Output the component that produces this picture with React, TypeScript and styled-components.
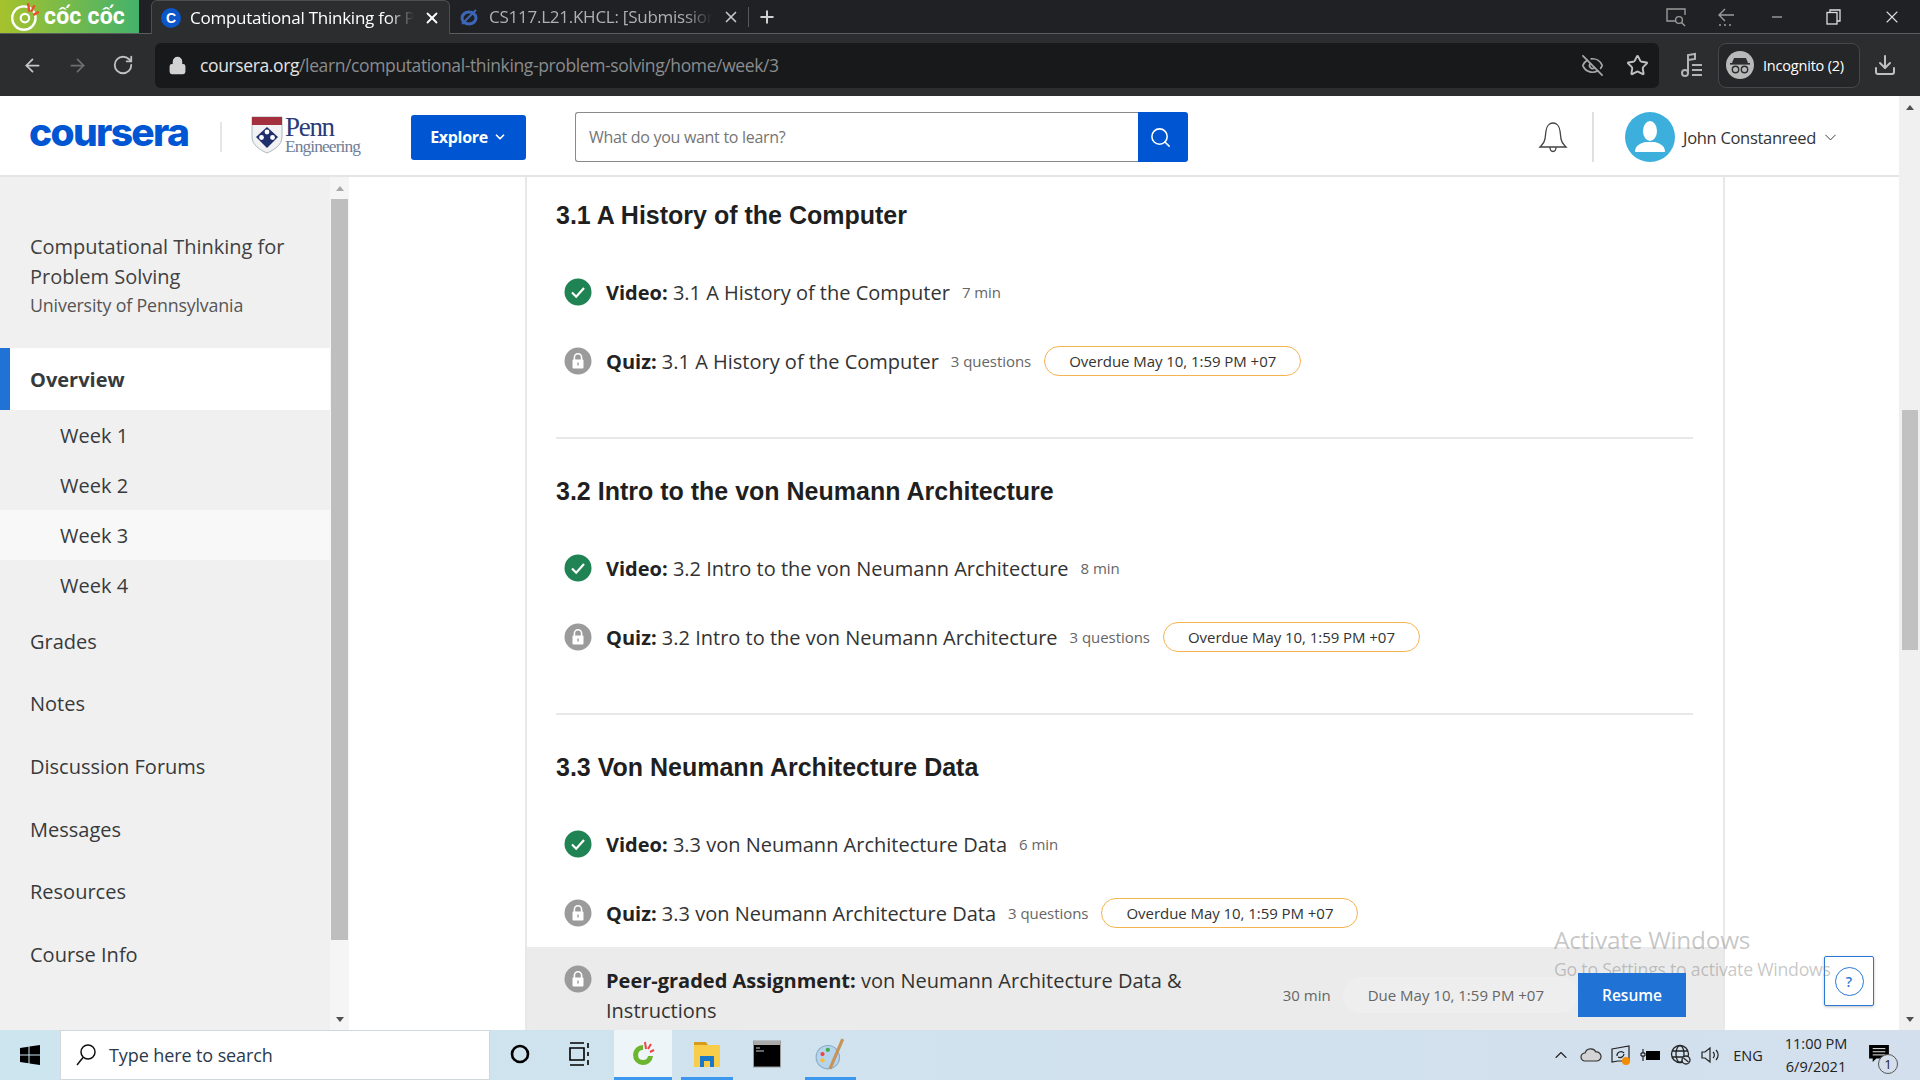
import React from "react";
import styled, { createGlobalStyle } from "styled-components";
import { ArrowLeft, ArrowRight, RotateCw, EyeOff, Star, Download, Search, ChevronDown, X, Plus, Minus, ChevronUp, Lock } from "lucide-react";

const Global = createGlobalStyle`
  html, body { margin: 0; padding: 0; width: 1920px; height: 1080px; overflow: hidden; background: #fff; }
  * { box-sizing: border-box; }
  body { font-family: "Open Sans", "Liberation Sans", sans-serif; }
`;
const Shell = styled.div`width:1920px;height:1080px;display:flex;flex-direction:column;position:relative;overflow:hidden;`;

/* browser tabs */
const TabBar = styled.div`height:34px;background:#202124;display:flex;align-items:stretch;border-bottom:1px solid #5a5c5e;color:#fff;`;
const Brand = styled.div`width:139px;background:linear-gradient(90deg,#a6c22c,#44b26c);display:flex;align-items:center;gap:1px;padding-left:9px;font:700 23px "Roboto",sans-serif;letter-spacing:.2px;color:#fff;`;
const ActiveTab = styled.div`margin-left:12px;width:299px;background:#2b2d2e;border:1px solid #4c4e50;border-bottom:none;border-radius:6px 6px 0 0;display:flex;align-items:center;padding:0 8px 0 9px;gap:9px;height:34px;position:relative;`;
const Tab = styled.div`width:298px;display:flex;align-items:center;padding:0 8px 0 9px;gap:10px;color:#aeb0b2;`;
const TabTitle = styled.span`flex:1;white-space:nowrap;overflow:hidden;font-size:17px;letter-spacing:-.25px;-webkit-mask-image:linear-gradient(90deg,#000 88%,transparent);mask-image:linear-gradient(90deg,#000 88%,transparent);`;
const Favicon = styled.span`width:20px;height:20px;border-radius:50%;background:#0b57c9;color:#fff;display:flex;align-items:center;justify-content:center;font:800 14px "Liberation Sans",sans-serif;flex:none;`;
const NewTab = styled.div`width:36px;display:flex;align-items:center;justify-content:center;border-left:1px solid #55575a;margin:7px 0;height:20px;`;
const WindowControls = styled.div`margin-left:auto;display:flex;align-items:center;color:#c8c8c8;`;
const WinBtn = styled.span<{ $w: number }>`width:${p => p.$w}px;display:flex;justify-content:center;`;

/* browser toolbar */
const Toolbar = styled.div`height:62px;background:#2b2d2e;display:flex;align-items:center;color:#c9c9c9;`;
const NavGroup = styled.div`width:155px;display:flex;align-items:center;padding-left:22px;gap:24px;`;
const AddressBar = styled.div`width:1504px;height:45px;background:#18191a;border-radius:6px;display:flex;align-items:center;padding:0 10px 0 13px;font-size:17.5px;letter-spacing:-.38px;color:#8a8c8e;`;
const Host = styled.span`color:#e4e4e4;margin-left:13px;`;
const AddressEnd = styled.div`margin-left:auto;display:flex;gap:22px;align-items:center;color:#a8a8a8;`;
const IncognitoBox = styled.div`margin-left:14px;width:142px;height:45px;border:1px solid #45474a;background:#242627;border-radius:8px;display:flex;align-items:center;padding-left:7px;gap:9px;color:#fff;font-size:14.5px;letter-spacing:-.2px;`;
const IncogFace = styled.span`width:28px;height:28px;border-radius:50%;background:#b9b9b9;display:flex;align-items:center;justify-content:center;flex:none;`;

/* page */
const Viewport = styled.div`height:934px;display:flex;overflow:hidden;`;
const PageArea = styled.div`flex:1;display:flex;flex-direction:column;min-width:0;`;
const Header = styled.header`height:81px;flex:none;border-bottom:2px solid #e5e5e5;padding-top:3px;display:flex;align-items:center;background:#fff;`;
const Wordmark = styled.div`margin-left:29px;width:162px;padding-bottom:11px;font:800 39px/1 "Inter",sans-serif;letter-spacing:-1.7px;color:#0056d2;`;
const HeaderRule = styled.div`width:2px;height:30px;background:#e5e5e5;margin-left:29px;`;
const Penn = styled.div`margin-left:29px;width:113px;display:flex;align-items:flex-start;gap:2px;color:#3b4a7a;height:42px;`;
const PennText = styled.div`font:400 27px/20px "Liberation Serif",serif;letter-spacing:-1.3px;color:#2b3a78;padding-top:1px;small{display:block;font-size:17.4px;line-height:18px;color:#6f7d96;letter-spacing:-.9px;}`;
const Explore = styled.button`margin-left:47px;width:115px;height:45px;background:#0056d2;border:none;border-radius:3px;color:#fff;font:700 16px "Open Sans",sans-serif;letter-spacing:-.3px;display:flex;align-items:center;justify-content:center;gap:5px;padding:0;`;
const SearchWrap = styled.div`margin-left:49px;width:613px;height:50px;display:flex;`;
const SearchInput = styled.div`flex:1;border:1px solid #8a8a8a;border-right:none;border-radius:3px 0 0 3px;display:flex;align-items:center;padding-left:13px;color:#757575;font-size:16px;letter-spacing:-.3px;`;
const SearchBtn = styled.div`width:50px;background:#0056d2;display:flex;align-items:center;justify-content:center;padding-right:6px;color:#fff;border-radius:0 3px 3px 0;`;
const BellWrap = styled.div`margin-left:348px;width:34px;display:flex;justify-content:center;`;
const Rule2 = styled.div`width:2px;height:50px;background:#e0e0e0;margin-left:22px;`;
const Avatar = styled.div`margin-left:31px;width:50px;height:50px;border-radius:50%;background:#3cafdc;overflow:hidden;flex:none;`;
const UserName = styled.div`margin-left:8px;font-size:16.5px;letter-spacing:-.3px;color:#333;display:flex;align-items:center;gap:5px;white-space:nowrap;`;

const Body = styled.div`flex:1;display:flex;min-height:0;`;
const Sidebar = styled.aside`width:330px;flex:none;background:#f0f0f0;display:flex;flex-direction:column;padding-top:55px;color:#373a3c;`;
const CourseTitle = styled.div`padding:0 30px;font-size:20px;line-height:30px;color:#414141;letter-spacing:-.03px;`;
const School = styled.div`padding:0 30px;font-size:17.8px;line-height:26px;color:#555;letter-spacing:-.15px;margin-bottom:30px;`;
const NavMain = styled.div<{ $active?: boolean }>`height:${p => p.$active ? 62 : 62.6}px;display:flex;align-items:center;padding-left:${p => p.$active ? 20 : 30}px;font-size:20px;font-weight:${p => p.$active ? 700 : 400};color:#373a3c;background:${p => p.$active ? "#fff" : "transparent"};border-left:${p => p.$active ? "10px solid #2073d5" : "none"};`;
const NavWeek = styled.div<{ $on?: boolean }>`height:50px;display:flex;align-items:center;padding-left:60px;font-size:20px;color:#373a3c;background:${p => p.$on ? "#f8f8f8" : "transparent"};`;
const SideScroll = styled.div`width:19px;flex:none;background:#f5f5f5;display:flex;flex-direction:column;align-items:center;`;
const Arrow = styled.div<{ $dir: "up" | "down"; $color: string; $box: number }>`height:${p => p.$box}px;flex:none;display:flex;align-items:center;justify-content:center;&::after{content:"";border-left:4.5px solid transparent;border-right:4.5px solid transparent;${p => p.$dir === "up" ? `border-bottom:5px solid ${p.$color}` : `border-top:5px solid ${p.$color}`};}`;
const SideThumb = styled.div`width:17px;height:741px;background:#bebebe;`;
const Main = styled.main`flex:1;padding-left:176px;min-width:0;`;
const Column = styled.div`width:1200px;height:100%;border-left:2px solid #e8e8e8;border-right:2px solid #e8e8e8;overflow:hidden;`;
const Section = styled.section`padding:37px 30px 0 29px;&:first-child{padding-top:23px;}`;
const Heading = styled.h2`margin:0 0 42px;font:700 25px/30px "Liberation Sans",sans-serif;color:#1f1f1f;`;
const Row = styled.div`height:40px;display:flex;align-items:center;margin:0 0 29px 8px;white-space:nowrap;`;
const RowIcon = styled.span`width:28px;height:28px;flex:none;margin-right:14px;`;
const RowTitle = styled.span`font-size:20px;color:#333;b{font-weight:700;color:#222;}`;
const RowMeta = styled.span`font-size:15px;color:#666;margin-left:12px;letter-spacing:-.05px;`;
const Pill = styled.span`margin-left:13px;height:30px;width:257px;border:1px solid #f5b450;border-radius:15px;display:flex;align-items:center;justify-content:center;font-size:15px;color:#333;letter-spacing:-.05px;`;
const Divider = styled.div`height:2px;background:#e8e8e8;margin-top:56px;`;
const PeerRow = styled.div`margin-top:-15px;background:#ebebeb;height:90px;padding:19px 37px 0 37px;display:flex;align-items:flex-start;`;
const PeerIcon = styled(RowIcon)`margin-top:-1px;`;
const PeerTitle = styled.div`width:596px;font-size:20px;line-height:30px;color:#333;b{font-weight:700;color:#222;}`;
const PeerMeta = styled.div`margin-left:auto;margin-top:-1px;display:flex;align-items:center;height:60px;font-size:15px;color:#666;white-space:nowrap;`;
const DuePill = styled.span`margin-left:12px;height:36px;padding:0 34px 0 25px;border-radius:18px;background:#eeeeee;display:flex;align-items:center;`;
const Resume = styled.button`width:108px;height:44px;margin-left:0;background:#2073d5;color:#fff;border:none;font:600 15.5px "Open Sans",sans-serif;padding:0;position:relative;z-index:2;`;
const PageScroll = styled.div`width:21px;flex:none;background:#f0f0f0;display:flex;flex-direction:column;align-items:center;`;
const PageThumb = styled.div`width:16px;height:240px;margin-top:291px;background:#c1c1c1;`;
const ScrollFill = styled.div`flex:1;`;

/* overlays */
const Help = styled.div`position:absolute;left:1824px;top:956px;width:50px;height:50px;background:#fff;border:1px solid #2a78d6;border-radius:2px;display:flex;align-items:center;justify-content:center;box-shadow:0 1px 3px rgba(0,0,0,.25);`;
const HelpCircle = styled.span`width:29px;height:29px;border:1px solid #2a78d6;border-radius:50%;display:flex;align-items:center;justify-content:center;color:#2a78d6;font-size:14px;font-weight:600;`;
const Watermark = styled.div`position:absolute;z-index:1;left:1554px;top:922px;color:rgba(120,120,120,.42);pointer-events:none;white-space:nowrap;`;
const WmTitle = styled.div`font-size:24.4px;line-height:36px;letter-spacing:-.25px;`;
const WmSub = styled.div`font-size:17.7px;line-height:23px;letter-spacing:-.25px;`;

/* taskbar */
const Taskbar = styled.footer`height:50px;flex:1;background:linear-gradient(90deg,#cde5ee,#d3dfed);display:flex;align-items:stretch;color:#111;`;
const StartBtn = styled.div`width:60px;display:flex;align-items:center;justify-content:center;`;
const TaskSearch = styled.div`width:430px;background:#fff;border:1px solid #d0d8dc;display:flex;align-items:center;padding-left:14px;gap:12px;font-size:18px;color:#2a3a4a;letter-spacing:-.1px;`;
const TaskIcon = styled.div<{ $w: number; $on?: boolean; $bar?: boolean }>`width:${p => p.$w}px;display:flex;align-items:center;justify-content:center;background:${p => p.$on ? "#edf5f9" : "transparent"};border-bottom:3px solid ${p => p.$bar ? "#3b98ee" : "transparent"};flex:none;`;
const Tray = styled.div`margin-left:auto;display:flex;align-items:center;font-size:14.5px;color:#222;`;
const TrayItem = styled.span<{ $w: number }>`width:${p => p.$w}px;display:flex;justify-content:center;align-items:center;flex:none;`;
const Clock = styled.div`width:96px;text-align:center;font-size:14.5px;line-height:23px;`;
const NotifBadge = styled.span`position:absolute;left:14px;top:24px;width:20px;height:20px;border-radius:50%;border:1px solid #555;background:#d5dfec;font-size:13px;display:flex;align-items:center;justify-content:center;`;
const Notif = styled.div`width:34px;height:50px;margin-right:22px;position:relative;display:flex;align-items:center;justify-content:center;`;

const CheckIcon = () => (
  <RowIcon><svg width="28" height="28" viewBox="0 0 28 28"><circle cx="14" cy="14" r="13.5" fill="#1f8354" /><path d="M8 14.5l4.2 4.2L20 10" fill="none" stroke="#fff" strokeWidth="2.2" /></svg></RowIcon>
);
const LockGlyph = () => (
  <svg width="28" height="28" viewBox="0 0 28 28"><circle cx="14" cy="14" r="13.5" fill="#9b9b9b" /><path d="M10.4 13v-2.6a3.6 3.6 0 0 1 7.2 0V13" fill="none" stroke="#fff" strokeWidth="1.6" /><rect x="8.5" y="12.5" width="11" height="9" rx="1" fill="#fff" /><rect x="13.3" y="15.5" width="1.4" height="3" fill="#9b9b9b" /></svg>
);
const LockIcon = () => <RowIcon><LockGlyph /></RowIcon>;

const Item = ({ kind, done, title, meta, overdue }: { kind: string; done?: boolean; title: string; meta: string; overdue?: boolean }) => (
  <Row>
    {done ? <CheckIcon /> : <LockIcon />}
    <RowTitle><b>{kind}:</b> {title}</RowTitle>
    <RowMeta>{meta}</RowMeta>
    {overdue && <Pill>Overdue May 10, 1:59 PM +07</Pill>}
  </Row>
);

const sections = [
  { h: "3.1 A History of the Computer", v: "3.1 A History of the Computer", vm: "7 min" },
  { h: "3.2 Intro to the von Neumann Architecture", v: "3.2 Intro to the von Neumann Architecture", vm: "8 min" },
];

export default function App() {
  return (
    <Shell>
      <Global />
      <TabBar>
        <Brand>
          <svg width="34" height="32" viewBox="0 0 32 30" style={{ flex: "none" }}><circle cx="14" cy="16" r="11" fill="none" stroke="#fff" strokeWidth="2.2" /><circle cx="15" cy="16" r="4" fill="none" stroke="#fff" strokeWidth="2" /><path d="M18 2l1 8M24 4l-3 6M28 10l-5 3" stroke="#f04b2f" strokeWidth="2.2" /></svg>
          <span>cốc cốc</span>
        </Brand>
        <ActiveTab>
          <Favicon>C</Favicon>
          <TabTitle>Computational Thinking for Problem</TabTitle>
          <X size={18} strokeWidth={2.4} color="#fff" />
        </ActiveTab>
        <Tab>
          <svg width="20" height="20" viewBox="0 0 20 20" style={{ flex: "none" }}><ellipse cx="10" cy="11" rx="7" ry="6" fill="none" stroke="#3d66b8" strokeWidth="3" /><path d="M3 17L17 3" stroke="#3d66b8" strokeWidth="2" /></svg>
          <TabTitle>CS117.L21.KHCL: [Submission</TabTitle>
          <X size={18} strokeWidth={2.2} color="#c6c6c6" />
        </Tab>
        <NewTab><Plus size={20} color="#d0d0d0" strokeWidth={2.4} /></NewTab>
        <WindowControls>
          <WinBtn $w={50}><svg width="22" height="20" viewBox="0 0 22 20" fill="none" stroke="#9a9a9a" strokeWidth="1.4"><path d="M10 14H2V2h18v6" /><circle cx="14" cy="13" r="3.4" /><path d="M16.5 15.5L20 19" /></svg></WinBtn>
          <WinBtn $w={50}><svg width="20" height="20" viewBox="0 0 20 20" fill="none" stroke="#9a9a9a" strokeWidth="1.4"><path d="M9 2L3 8l6 6M3 8h15" /><path d="M3 18h2M8 18h2M13 18h2" /></svg></WinBtn>
          <WinBtn $w={52}><Minus size={16} strokeWidth={1.4} color="#ddd" /></WinBtn>
          <WinBtn $w={60}><svg width="15" height="16" viewBox="0 0 15 16" fill="none" stroke="#ddd" strokeWidth="1.3"><rect x="1" y="3.5" width="10" height="11.5" /><path d="M4 3.5V1h10v11h-3" /></svg></WinBtn>
          <WinBtn $w={57}><X size={20} strokeWidth={1.3} color="#ddd" /></WinBtn>
        </WindowControls>
      </TabBar>
      <Toolbar>
        <NavGroup>
          <ArrowLeft size={21} color="#c8c8c8" />
          <ArrowRight size={21} color="#6d6f71" />
          <RotateCw size={22} color="#c0c0c0" />
        </NavGroup>
        <AddressBar>
          <Lock size={19} fill="#d2d2d2" color="#d2d2d2" />
          <Host>coursera.org</Host><span>/learn/computational-thinking-problem-solving/home/week/3</span>
          <AddressEnd>
            <EyeOff size={23} strokeWidth={1.8} />
            <Star size={23} strokeWidth={2} color="#c0c0c0" />
          </AddressEnd>
        </AddressBar>
        <svg width="24" height="26" viewBox="0 0 24 26" fill="none" stroke="#b5b5b5" strokeWidth="2" style={{ marginLeft: 21, flex: "none" }}><circle cx="5" cy="21" r="3" /><path d="M8 21V3l7-1v5l-7 1" /><path d="M12 13h10M12 18h10M12 23h10" /></svg>
        <IncognitoBox>
          <IncogFace><svg width="22" height="20" viewBox="0 0 22 20"><path d="M5 3h12l2 5H3z" fill="#2b2d2e" /><rect x="1" y="8" width="20" height="1.6" fill="#2b2d2e" /><circle cx="6.5" cy="14.5" r="3.2" fill="none" stroke="#2b2d2e" strokeWidth="1.4" /><circle cx="15.5" cy="14.5" r="3.2" fill="none" stroke="#2b2d2e" strokeWidth="1.4" /></svg></IncogFace>
          Incognito (2)
        </IncognitoBox>
        <Download size={24} color="#c0c0c0" strokeWidth={2} style={{ marginLeft: 13 }} />
      </Toolbar>
      <Viewport>
        <PageArea>
          <Header>
            <Wordmark>coursera</Wordmark>
            <HeaderRule />
            <Penn>
              <svg width="32" height="38" viewBox="0 0 32 38" style={{ flex: "none" }}><path d="M1 1h30v20c0 8-8 13-15 16C9 34 1 29 1 21z" fill="#f2f2f4" stroke="#9aa" strokeWidth=".8" /><rect x="1" y="1" width="30" height="8" fill="#a4303f" /><path d="M16 11l11 10-11 11L5 21z" fill="#1f2f6b" /><circle cx="16" cy="16" r="2.4" fill="#fff" /><circle cx="10.5" cy="21.5" r="2.4" fill="#fff" /><circle cx="21.5" cy="21.5" r="2.4" fill="#fff" /></svg>
              <PennText>Penn<small>Engineering</small></PennText>
            </Penn>
            <Explore>Explore <ChevronDown size={14} strokeWidth={3} /></Explore>
            <SearchWrap>
              <SearchInput>What do you want to learn?</SearchInput>
              <SearchBtn><Search size={23} strokeWidth={1.6} /></SearchBtn>
            </SearchWrap>
            <BellWrap>
              <svg width="30" height="32" viewBox="0 0 30 32" fill="none" stroke="#444" strokeWidth="1.3"><path d="M2 26c2-2 4-3 5-8l1-8c.5-5 3.5-8 7-8s6.500 3 7 8l1 8c1 5 3 6 5 8z" /><path d="M12 26c0 6 6 6 6 0" /></svg>
            </BellWrap>
            <Rule2 />
            <Avatar><svg width="50" height="50" viewBox="0 0 50 50"><ellipse cx="25" cy="19" rx="7" ry="10" fill="#fff" /><path d="M10 40c0-6 4-8 10-10h10c6 2 10 4 10 10z" fill="#fff" /></svg></Avatar>
            <UserName>John Constanreed <ChevronDown size={19} strokeWidth={1.2} /></UserName>
          </Header>
          <Body>
            <Sidebar>
              <CourseTitle>Computational Thinking for Problem Solving</CourseTitle>
              <School>University of Pennsylvania</School>
              <NavMain $active>Overview</NavMain>
              <NavWeek>Week 1</NavWeek>
              <NavWeek>Week 2</NavWeek>
              <NavWeek $on>Week 3</NavWeek>
              <NavWeek>Week 4</NavWeek>
              <NavMain>Grades</NavMain>
              <NavMain>Notes</NavMain>
              <NavMain>Discussion Forums</NavMain>
              <NavMain>Messages</NavMain>
              <NavMain>Resources</NavMain>
              <NavMain>Course Info</NavMain>
            </Sidebar>
            <SideScroll>
              <Arrow $dir="up" $color="#a8a8a8" $box={22} />
              <SideThumb />
              <ScrollFill />
              <Arrow $dir="down" $color="#505050" $box={22} />
            </SideScroll>
            <Main>
              <Column>
                {sections.map(s => (
                  <Section key={s.h}>
                    <Heading>{s.h}</Heading>
                    <Item kind="Video" done title={s.v} meta={s.vm} />
                    <Item kind="Quiz" title={s.v} meta="3 questions" overdue />
                    <Divider />
                  </Section>
                ))}
                <Section>
                  <Heading>3.3 Von Neumann Architecture Data</Heading>
                  <Item kind="Video" done title="3.3 von Neumann Architecture Data" meta="6 min" />
                  <Item kind="Quiz" title="3.3 von Neumann Architecture Data" meta="3 questions" overdue />
                </Section>
                <PeerRow>
                  <PeerIcon><LockGlyph /></PeerIcon>
                  <PeerTitle><b>Peer-graded Assignment:</b> von Neumann Architecture Data &amp; Instructions</PeerTitle>
                  <PeerMeta>
                    <span>30 min</span>
                    <DuePill>Due May 10, 1:59 PM +07</DuePill>
                    <Resume>Resume</Resume>
                  </PeerMeta>
                </PeerRow>
              </Column>
            </Main>
          </Body>
        </PageArea>
        <PageScroll>
          <Arrow $dir="up" $color="#505050" $box={23} />
          <PageThumb />
          <ScrollFill />
          <Arrow $dir="down" $color="#505050" $box={22} />
        </PageScroll>
      </Viewport>
      <Taskbar>
        <StartBtn><svg width="20" height="20" viewBox="0 0 20 20" fill="#000"><path d="M0 3l8.5-1.2v7.7H0zM9.5 1.6L20 0v9.5H9.5zM0 10.5h8.5v7.7L0 17zM9.5 10.5H20V20L9.5 18.4z" /></svg></StartBtn>
        <TaskSearch>
          <svg width="22" height="24" viewBox="0 0 22 24" fill="none" stroke="#111" strokeWidth="1.5"><circle cx="13" cy="9" r="7" /><path d="M8 14.5L2 22" /></svg>
          Type here to search
        </TaskSearch>
        <TaskIcon $w={60}><svg width="20" height="20" viewBox="0 0 20 20"><circle cx="10" cy="10" r="8" fill="none" stroke="#000" strokeWidth="2.6" /></svg></TaskIcon>
        <TaskIcon $w={60}><svg width="22" height="24" viewBox="0 0 22 24" fill="none" stroke="#000" strokeWidth="1.6"><path d="M1 1h14M1 23h14M1 6h14v12H1zM19 1v5M19 10v4M19 18v5" /></svg></TaskIcon>
        <TaskIcon $w={4} />
        <TaskIcon $w={58} $on $bar><svg width="24" height="26" viewBox="0 0 24 26"><path d="M12 4a10 10 0 1 0 10 11h-5a5 5 0 1 1-5-6z" fill="#6bb62e" /><path d="M14 1l1 7M20 3l-3 5M23 9l-4 2" stroke="#e44" strokeWidth="2" /></svg></TaskIcon>
        <TaskIcon $w={9} />
        <TaskIcon $w={52} $bar><svg width="28" height="28" viewBox="0 0 28 28"><path d="M1 2h12l2 3h-14z" fill="#d89c1c" /><rect x="1" y="5" width="26" height="22" fill="#f9cc4a" /><path d="M7 27V16h14v11h-4v-6h-6v6z" fill="#1a78c8" /></svg></TaskIcon>
        <TaskIcon $w={68}><svg width="28" height="28" viewBox="0 0 28 28"><rect x="0.5" y="1" width="27" height="26" fill="#000" stroke="#999" /><rect x="1" y="1" width="26" height="4" fill="#aaa" /><path d="M3 8h4M3 11h8" stroke="#ccc" /></svg></TaskIcon>
        <TaskIcon $w={4} />
        <TaskIcon $w={51} $bar><svg width="32" height="34" viewBox="0 0 30 32"><ellipse cx="12" cy="19" rx="11" ry="11" fill="#b5d4ee" stroke="#8aa9c4" /><circle cx="7" cy="16" r="2" fill="#e44" /><circle cx="12" cy="12" r="2" fill="#4a4" /><circle cx="7" cy="22" r="2" fill="#fb3" /><path d="M26 2L14 30" stroke="#c8935a" strokeWidth="3" /></svg></TaskIcon>
        <Tray>
          <TrayItem $w={30}><ChevronUp size={20} strokeWidth={1.3} /></TrayItem>
          <TrayItem $w={30}><svg width="22" height="14" viewBox="0 0 22 14"><path d="M5 13a4 4 0 0 1 0-8 6 6 0 0 1 11-1 4.5 4.5 0 0 1 1 9z" fill="#d4d4d4" stroke="#333" strokeWidth="1.2" /></svg></TrayItem>
          <TrayItem $w={30}><svg width="22" height="22" viewBox="0 0 22 22" fill="none" stroke="#222" strokeWidth="1.2"><path d="M2 5l17-3v15H8l-6 1z" /><path d="M7 12a4 4 0 0 1 7-3M14 10a4 4 0 0 1-6 3" /><circle cx="16" cy="17" r="4" fill="#f28c00" stroke="none" /></svg></TrayItem>
          <TrayItem $w={30}><svg width="22" height="14" viewBox="0 0 22 14"><rect x="6" y="3" width="14" height="9" fill="#000" /><path d="M3 1v4M1 5h4v3H1zM3 8v5" stroke="#000" fill="none" /></svg></TrayItem>
          <TrayItem $w={30}><svg width="22" height="22" viewBox="0 0 22 22" fill="none" stroke="#222" strokeWidth="1.3"><circle cx="10" cy="10" r="8.5" /><ellipse cx="10" cy="10" rx="4" ry="8.5" /><path d="M2 7h16M2 13h16" /><circle cx="16" cy="16" r="4" fill="#d5dfec" /><path d="M13.5 14l5 4" /></svg></TrayItem>
          <TrayItem $w={32}><svg width="22" height="18" viewBox="0 0 22 18" fill="none" stroke="#222" strokeWidth="1.2"><path d="M1 6v6h3l5 4V2L4 6z" /><path d="M12 6a4 4 0 0 1 0 6M15 4a7 7 0 0 1 0 10" /></svg></TrayItem>
          <TrayItem $w={40}>ENG</TrayItem>
          <Clock>11:00 PM<br />6/9/2021</Clock>
          <Notif>
            <svg width="22" height="18" viewBox="0 0 22 20" style={{ marginLeft: -4, marginTop: -2 }}><path d="M0 0h22v15H8l-4 4v-4H0z" fill="#000" /><path d="M4 4h14M4 7.5h14M4 11h14" stroke="#fff" /></svg>
            <NotifBadge>1</NotifBadge>
          </Notif>
        </Tray>
      </Taskbar>
      <Help><HelpCircle>?</HelpCircle></Help>
      <Watermark>
        <WmTitle>Activate Windows</WmTitle>
        <WmSub>Go to Settings to activate Windows</WmSub>
      </Watermark>
    </Shell>
  );
}
